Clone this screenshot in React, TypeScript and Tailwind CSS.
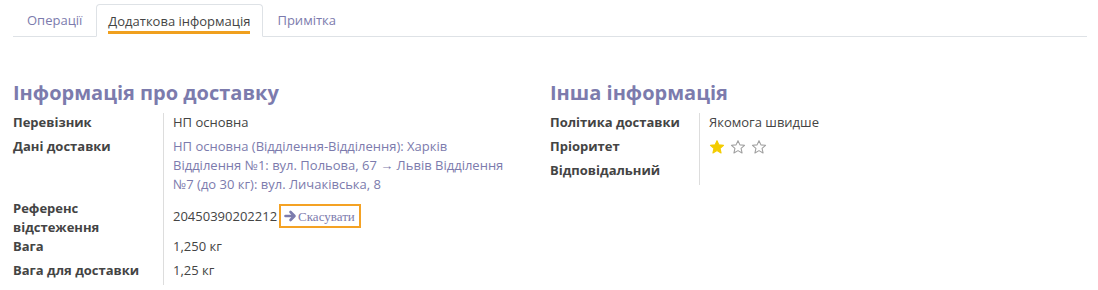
const font = "font-['Open_Sans','Liberation_Sans',sans-serif]";

function Star({ filled }: { filled: boolean }) {
  return (
    <svg width="16" height="16" viewBox="0 0 24 24" className="mr-[5px]">
      <path
        d="M12 2.5l2.9 6.3 6.9.7-5.2 4.6 1.5 6.8L12 17.4l-6.1 3.5 1.5-6.8L2.2 9.5l6.9-.7z"
        fill={filled ? "#f3cc00" : "none"}
        stroke={filled ? "#f3cc00" : "#a0a0a0"}
        strokeWidth="1.6"
        strokeLinejoin="round"
      />
    </svg>
  );
}

function Row({ label, children, pad = true }: { label: React.ReactNode; children?: React.ReactNode; pad?: boolean }) {
  const p = pad ? "pb-[5px]" : "pb-0";
  return (
    <>
      <div className={`pr-2 font-bold text-[#444] leading-[19px] ${p}`}>{label}</div>
      <div className={`border-l border-[#ddd] pl-[9px] text-[#444] leading-[19px] ${p}`}>{children}</div>
    </>
  );
}

export default function App() {
  return (
    <div className={`${font} w-[1098px] h-[290px] bg-white text-[13px] overflow-hidden`}>
      <div className="mx-[13px] mr-[11px] mt-[4px] flex border-b border-[#dee2e6] h-[33px]">
        <div className="px-[14px] pt-[7px] text-[#7c7bad]">Операції</div>
        <div className="-mb-px pl-[11px] pr-[12px] pt-[7px] border border-b-white border-[#dee2e6] rounded-t-[4px] bg-white text-[#444]">
          <span className="inline-block border-b-[3px] border-[#f0a01e] pb-[1px] leading-[18px]">Додаткова інформація</span>
        </div>
        <div className="px-[14px] pt-[7px] text-[#7c7bad]">Примітка</div>
      </div>

      <div className="flex px-[13px] pt-[43px]">
        <div className="w-[538px] mr-[2px]">
          <h2 className="text-[20px] font-bold text-[#7c7bad] leading-[26px] mb-[7px]">Інформація про доставку</h2>
          <div className="grid grid-cols-[150px_1fr]">
            <Row label="Перевізник">НП основна</Row>
            <Row label="Дані доставки">
              <span className="text-[#7c7bad] block w-[340px]">
                НП основна (Відділення-Відділення): Харків Відділення №1: вул. Польова, 67 → Львів Відділення №7 (до 30 кг): вул. Личаківська, 8
              </span>
            </Row>
            <Row pad={false} label={<span className="block w-[120px]">Референс відстеження</span>}>
              <div className="flex items-center pt-[5px]">
                <span>20450390202212</span>
                <span className="ml-[2px] border-2 border-[#f4a224] pl-[3px] pr-[4px] h-[24px] flex items-center text-[#7c7bad] font-['Liberation_Serif',serif] text-[13px]">
                  <svg width="13" height="12" viewBox="0 0 13 12" className="mr-[1px]">
                    <path d="M1.5 6h8.5M6.5 2L10.5 6 6.5 10" stroke="#7c7bad" strokeWidth="2.6" fill="none" strokeLinecap="round" strokeLinejoin="round" />
                  </svg>
                  Скасувати
                </span>
              </div>
            </Row>
            <Row label="Вага">1,250 кг</Row>
            <Row label="Вага для доставки">1,25 кг</Row>
          </div>
        </div>
        <div className="w-[538px]">
          <h2 className="text-[20px] font-bold text-[#7c7bad] leading-[26px] mb-[7px]">Інша інформація</h2>
          <div className="grid grid-cols-[149px_1fr]">
            <Row label="Політика доставки">Якомога швидше</Row>
            <Row label="Пріоритет">
              <div className="flex h-[19px] items-center"><Star filled /><Star filled={false} /><Star filled={false} /></div>
            </Row>
            <Row label="Відповідальний" />
          </div>
        </div>
      </div>
    </div>
  );
}
